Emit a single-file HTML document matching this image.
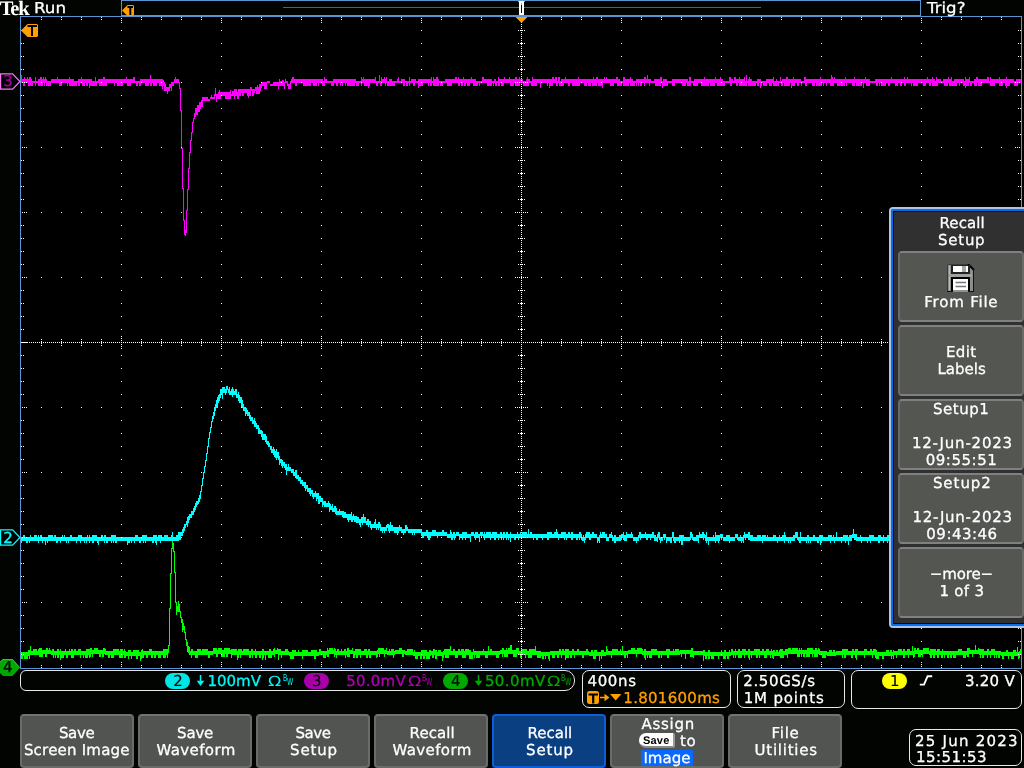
<!DOCTYPE html>
<html><head><meta charset="utf-8"><title>Tek Recall Setup</title>
<style>
html,body{margin:0;padding:0;background:#020402;}
body{width:1024px;height:768px;overflow:hidden;}
#root{width:1024px;height:768px;position:relative;overflow:hidden;will-change:transform;text-rendering:geometricPrecision;-webkit-text-stroke:0.3px;font-family:"DejaVu Sans","Liberation Sans",sans-serif;font-size:15px;color:#fff;line-height:17px;}
.scr{position:absolute;left:0;top:0;}
.t{position:absolute;white-space:nowrap;}
.box{position:absolute;border:1px solid #e8e8e8;border-radius:7px;box-sizing:border-box;}
.btn{position:absolute;top:714px;width:114px;height:54px;box-sizing:border-box;background:#525452;border-radius:4px;border:2px solid #6a6c6a;border-top-color:#727472;}
.btn.sel{background:#0a3f82;border-color:#0c5fd8;}
.pill{position:absolute;width:25px;height:16px;border-radius:8px;box-sizing:border-box;}
.panel{position:absolute;left:889px;top:207px;width:150px;height:421px;box-sizing:border-box;background:#303030;border:2px solid #adc6e0;border-radius:4px;box-shadow:inset 0 0 0 2px #0a6cf0,inset 0 0 0 3px #00004c;}
.pbtn{position:absolute;left:898px;width:126px;height:71px;box-sizing:border-box;background:#545652;border-radius:4px;border:2px solid #6a6a6a;border-top-color:#808080;border-bottom-color:#808080;}
.om{display:inline-block;font-size:14px;transform:scaleX(1.24);transform-origin:0 0;}
.bw{font-size:9.5px;line-height:12px;-webkit-text-stroke:0;transform:scaleX(0.66);transform-origin:0 0;}
.ch{font-size:15px;}
</style></head>
<body><div id="root">
<svg class="scr" width="1024" height="768" viewBox="0 0 1024 768" shape-rendering="crispEdges">
<rect x="21" y="17" width="1000" height="651" fill="#000"/>
<path d="M21.5 652V659M22.5 652V659M23.5 652V656M24.5 652V659M25.5 652V659M26.5 652V659M27.5 652V659M28.5 650V656M29.5 650V659M30.5 646V655M31.5 651V655M32.5 651V655M33.5 649V655M34.5 649V655M35.5 649V655M36.5 649V655M37.5 651V655M38.5 649V655M39.5 648V657M40.5 648V657M41.5 648V657M42.5 650V657M43.5 650V654M44.5 650V654M45.5 650V657M46.5 648V657M47.5 648V654M48.5 650V654M49.5 648V654M50.5 650V654M51.5 651V655M52.5 649V655M53.5 649V658M54.5 651V655M55.5 651V658M56.5 651V655M57.5 649V658M58.5 649V658M59.5 651V655M60.5 649V660M61.5 651V658M62.5 651V658M63.5 651V658M64.5 651V655M65.5 649V655M66.5 651V658M67.5 651V658M68.5 651V655M69.5 649V655M70.5 651V655M71.5 649V658M72.5 649V658M73.5 651V658M74.5 649V655M75.5 649V655M76.5 651V655M77.5 651V655M78.5 649V655M79.5 649V655M80.5 649V658M81.5 651V655M82.5 651V655M83.5 651V658M84.5 651V655M85.5 651V658M86.5 649V658M87.5 649V658M88.5 649V655M89.5 649V658M90.5 648V657M91.5 648V654M92.5 650V657M93.5 650V654M94.5 648V654M95.5 648V654M96.5 648V654M97.5 648V654M98.5 650V654M99.5 650V657M100.5 650V657M101.5 650V654M102.5 650V657M103.5 648V657M104.5 648V654M105.5 649V655M106.5 651V655M107.5 651V655M108.5 651V658M109.5 651V658M110.5 651V655M111.5 651V658M112.5 651V658M113.5 649V658M114.5 649V655M115.5 649V655M116.5 649V655M117.5 649V655M118.5 649V655M119.5 651V658M120.5 649V658M121.5 649V658M122.5 649V658M123.5 651V655M124.5 649V658M125.5 651V658M126.5 652V656M127.5 652V656M128.5 650V659M129.5 650V656M130.5 650V656M131.5 652V659M132.5 652V656M133.5 650V656M134.5 650V656M135.5 650V656M136.5 650V659M137.5 650V659M138.5 650V656M139.5 652V656M140.5 652V661M141.5 650V659M142.5 649V658M143.5 651V658M144.5 651V655M145.5 651V655M146.5 651V658M147.5 651V658M148.5 651V655M149.5 649V655M150.5 649V655M151.5 649V658M152.5 651V658M153.5 651V655M154.5 651V658M155.5 651V658M156.5 651V655M157.5 651V655M158.5 651V658M159.5 651V658M160.5 651V658M161.5 651V655M162.5 651V655M163.5 649V658M164.5 649V658M165.5 649V658M166.5 649V655M167.5 649V658M168.5 645V653M169.5 608V646M170.5 573V609M171.5 548V574M172.5 540V549M173.5 543V552M174.5 551V573M175.5 572V603M176.5 602V615M177.5 606V612M178.5 601V612M179.5 604V612M180.5 611V618M181.5 617V623M182.5 619V632M183.5 623V630M184.5 626V633M185.5 632V640M186.5 639V646M187.5 642V652M188.5 646V653M189.5 647V655M190.5 651V655M191.5 649V658M192.5 649V655M193.5 651V655M194.5 651V655M195.5 651V658M196.5 651V658M197.5 649V658M198.5 649V655M199.5 649V655M200.5 649V655M201.5 651V655M202.5 649V655M203.5 649V655M204.5 649V655M205.5 649V655M206.5 649V655M207.5 649V655M208.5 651V658M209.5 651V658M210.5 651V655M211.5 651V655M212.5 651V655M213.5 648V654M214.5 648V654M215.5 648V654M216.5 648V657M217.5 650V657M218.5 648V654M219.5 648V654M220.5 648V654M221.5 648V657M222.5 650V657M223.5 650V657M224.5 648V657M225.5 648V654M226.5 648V657M227.5 648V657M228.5 648V654M229.5 648V654M230.5 650V654M231.5 649V658M232.5 649V655M233.5 649V655M234.5 649V655M235.5 649V655M236.5 649V655M237.5 651V660M238.5 649V658M239.5 649V655M240.5 649V658M241.5 649V655M242.5 651V655M243.5 649V655M244.5 649V655M245.5 649V655M246.5 649V655M247.5 649V655M248.5 649V655M249.5 651V658M250.5 651V658M251.5 649V655M252.5 649V658M253.5 651V655M254.5 651V655M255.5 649V658M256.5 651V658M257.5 651V655M258.5 651V655M259.5 651V658M260.5 651V658M261.5 651V655M262.5 649V660M263.5 649V658M264.5 651V655M265.5 651V660M266.5 651V655M267.5 651V655M268.5 651V658M269.5 649V658M270.5 649V658M271.5 651V658M272.5 651V655M273.5 649V655M274.5 648V657M275.5 650V654M276.5 650V654M277.5 648V654M278.5 649V660M279.5 649V655M280.5 649V655M281.5 651V658M282.5 651V655M283.5 651V655M284.5 651V655M285.5 649V655M286.5 649V655M287.5 649V655M288.5 651V655M289.5 652V656M290.5 652V659M291.5 652V659M292.5 650V659M293.5 650V659M294.5 650V656M295.5 650V656M296.5 652V656M297.5 652V656M298.5 650V656M299.5 652V656M300.5 652V656M301.5 652V656M302.5 650V659M303.5 650V656M304.5 650V656M305.5 650V656M306.5 650V656M307.5 650V656M308.5 652V656M309.5 652V656M310.5 652V656M311.5 650V656M312.5 650V656M313.5 650V656M314.5 650V659M315.5 650V659M316.5 650V656M317.5 652V656M318.5 652V656M319.5 649V655M320.5 649V655M321.5 651V655M322.5 651V655M323.5 651V658M324.5 651V658M325.5 651V658M326.5 651V655M327.5 648V657M328.5 650V657M329.5 648V654M330.5 648V654M331.5 648V654M332.5 648V654M333.5 650V654M334.5 648V657M335.5 649V655M336.5 651V658M337.5 649V655M338.5 649V655M339.5 651V655M340.5 651V655M341.5 649V655M342.5 651V655M343.5 651V655M344.5 649V655M345.5 649V658M346.5 651V655M347.5 648V657M348.5 648V657M349.5 650V657M350.5 650V654M351.5 650V654M352.5 648V654M353.5 651V658M354.5 651V658M355.5 649V655M356.5 649V658M357.5 649V658M358.5 649V655M359.5 649V655M360.5 649V658M361.5 651V655M362.5 651V655M363.5 651V655M364.5 649V655M365.5 649V655M366.5 649V658M367.5 651V658M368.5 649V655M369.5 649V658M370.5 651V658M371.5 651V655M372.5 651V655M373.5 651V655M374.5 651V655M375.5 651V655M376.5 651V658M377.5 650V657M378.5 648V654M379.5 648V657M380.5 648V654M381.5 648V654M382.5 648V654M383.5 648V654M384.5 650V657M385.5 650V654M386.5 648V654M387.5 651V655M388.5 651V655M389.5 649V655M390.5 651V655M391.5 649V655M392.5 649V655M393.5 649V658M394.5 651V655M395.5 650V654M396.5 650V654M397.5 650V654M398.5 650V654M399.5 648V654M400.5 648V654M401.5 648V654M402.5 650V657M403.5 650V657M404.5 650V654M405.5 651V655M406.5 651V655M407.5 649V655M408.5 649V655M409.5 649V655M410.5 649V655M411.5 649V655M412.5 649V655M413.5 652V656M414.5 650V656M415.5 652V659M416.5 652V659M417.5 652V659M418.5 652V656M419.5 652V656M420.5 652V659M421.5 650V659M422.5 650V656M423.5 650V659M424.5 650V659M425.5 650V656M426.5 650V659M427.5 652V659M428.5 652V659M429.5 650V659M430.5 650V656M431.5 651V655M432.5 651V658M433.5 649V658M434.5 649V655M435.5 650V659M436.5 650V659M437.5 652V656M438.5 650V656M439.5 650V656M440.5 650V656M441.5 652V656M442.5 652V661M443.5 651V658M444.5 649V655M445.5 649V658M446.5 649V658M447.5 649V658M448.5 649V658M449.5 649V655M450.5 646V655M451.5 651V655M452.5 651V655M453.5 649V655M454.5 649V655M455.5 651V658M456.5 651V658M457.5 651V658M458.5 649V655M459.5 649V655M460.5 651V655M461.5 649V655M462.5 649V658M463.5 649V658M464.5 651V658M465.5 649V658M466.5 649V655M467.5 649V655M468.5 649V655M469.5 650V659M470.5 650V659M471.5 652V659M472.5 652V659M473.5 649V655M474.5 651V658M475.5 651V655M476.5 651V658M477.5 651V658M478.5 651V658M479.5 651V658M480.5 651V655M481.5 651V655M482.5 651V655M483.5 649V655M484.5 651V655M485.5 651V658M486.5 651V658M487.5 651V658M488.5 646V655M489.5 651V655M490.5 649V655M491.5 649V655M492.5 651V655M493.5 651V655M494.5 651V655M495.5 651V655M496.5 651V658M497.5 651V658M498.5 651V658M499.5 651V655M500.5 650V654M501.5 650V654M502.5 648V657M503.5 648V654M504.5 650V657M505.5 650V657M506.5 648V657M507.5 650V657M508.5 648V654M509.5 648V654M510.5 645V654M511.5 645V654M512.5 650V654M513.5 650V657M514.5 650V657M515.5 650V657M516.5 648V657M517.5 648V654M518.5 648V654M519.5 651V655M520.5 651V658M521.5 649V658M522.5 649V655M523.5 649V655M524.5 649V655M525.5 649V658M526.5 649V655M527.5 651V655M528.5 651V658M529.5 649V658M530.5 649V658M531.5 649V658M532.5 649V655M533.5 649V655M534.5 649V655M535.5 646V655M536.5 651V655M537.5 651V658M538.5 651V658M539.5 651V658M540.5 651V658M541.5 652V656M542.5 652V659M543.5 652V659M544.5 652V656M545.5 652V659M546.5 652V656M547.5 652V656M548.5 652V659M549.5 652V661M550.5 651V655M551.5 651V655M552.5 651V658M553.5 651V658M554.5 651V658M555.5 651V655M556.5 651V655M557.5 651V658M558.5 651V658M559.5 649V655M560.5 649V655M561.5 651V658M562.5 649V655M563.5 649V655M564.5 651V655M565.5 649V660M566.5 649V658M567.5 649V658M568.5 649V658M569.5 651V655M570.5 651V658M571.5 651V658M572.5 649V655M573.5 649V655M574.5 651V658M575.5 651V655M576.5 651V655M577.5 649V655M578.5 649V655M579.5 651V655M580.5 651V655M581.5 651V655M582.5 651V658M583.5 651V658M584.5 651V655M585.5 651V655M586.5 649V655M587.5 649V655M588.5 651V655M589.5 652V656M590.5 652V656M591.5 650V656M592.5 650V656M593.5 652V659M594.5 650V659M595.5 650V659M596.5 650V656M597.5 652V656M598.5 652V656M599.5 652V661M600.5 652V656M601.5 650V659M602.5 650V656M603.5 650V656M604.5 652V656M605.5 652V656M606.5 646V655M607.5 649V655M608.5 651V655M609.5 651V655M610.5 651V655M611.5 651V658M612.5 649V655M613.5 649V655M614.5 649V655M615.5 649V655M616.5 649V655M617.5 649V655M618.5 651V655M619.5 651V655M620.5 649V655M621.5 651V655M622.5 646V655M623.5 651V655M624.5 651V658M625.5 651V658M626.5 651V655M627.5 651V658M628.5 650V654M629.5 650V654M630.5 650V654M631.5 648V654M632.5 648V654M633.5 648V654M634.5 648V654M635.5 650V654M636.5 650V657M637.5 648V654M638.5 648V654M639.5 648V654M640.5 648V654M641.5 648V654M642.5 649V655M643.5 651V655M644.5 649V658M645.5 649V660M646.5 651V655M647.5 651V658M648.5 651V655M649.5 651V658M650.5 651V658M651.5 649V658M652.5 649V655M653.5 649V655M654.5 649V655M655.5 649V655M656.5 649V655M657.5 651V655M658.5 651V658M659.5 651V658M660.5 651V655M661.5 651V658M662.5 651V655M663.5 651V655M664.5 651V655M665.5 651V655M666.5 649V655M667.5 649V658M668.5 649V658M669.5 649V655M670.5 651V655M671.5 651V655M672.5 651V655M673.5 649V655M674.5 651V655M675.5 649V655M676.5 649V655M677.5 649V655M678.5 649V655M679.5 651V655M680.5 650V654M681.5 650V657M682.5 650V654M683.5 650V654M684.5 650V654M685.5 650V659M686.5 650V654M687.5 650V654M688.5 650V654M689.5 650V654M690.5 650V657M691.5 648V657M692.5 648V657M693.5 651V658M694.5 651V655M695.5 651V655M696.5 651V655M697.5 651V655M698.5 651V655M699.5 651V655M700.5 651V655M701.5 651V655M702.5 651V655M703.5 650V661M704.5 650V656M705.5 652V659M706.5 652V659M707.5 652V656M708.5 650V659M709.5 650V659M710.5 652V656M711.5 652V659M712.5 652V659M713.5 652V659M714.5 652V656M715.5 652V656M716.5 652V656M717.5 652V656M718.5 652V659M719.5 652V656M720.5 652V656M721.5 650V656M722.5 652V656M723.5 652V659M724.5 650V659M725.5 650V659M726.5 652V656M727.5 652V659M728.5 652V659M729.5 650V656M730.5 652V656M731.5 649V655M732.5 649V655M733.5 651V658M734.5 651V655M735.5 649V658M736.5 651V655M737.5 651V655M738.5 649V658M739.5 649V658M740.5 651V658M741.5 651V658M742.5 649V655M743.5 649V655M744.5 649V658M745.5 649V655M746.5 651V655M747.5 651V655M748.5 649V658M749.5 649V660M750.5 651V655M751.5 651V658M752.5 651V655M753.5 651V655M754.5 649V655M755.5 649V655M756.5 649V658M757.5 649V658M758.5 649V655M759.5 649V658M760.5 651V655M761.5 651V655M762.5 649V655M763.5 649V655M764.5 651V658M765.5 651V658M766.5 649V658M767.5 649V655M768.5 649V655M769.5 651V655M770.5 651V658M771.5 649V655M772.5 651V658M773.5 650V659M774.5 650V656M775.5 652V656M776.5 650V656M777.5 650V656M778.5 652V656M779.5 650V656M780.5 649V658M781.5 649V658M782.5 649V658M783.5 651V658M784.5 651V655M785.5 649V655M786.5 649V655M787.5 649V658M788.5 648V654M789.5 648V654M790.5 648V654M791.5 650V654M792.5 648V654M793.5 648V654M794.5 648V654M795.5 648V654M796.5 648V654M797.5 648V657M798.5 650V657M799.5 648V657M800.5 650V654M801.5 648V657M802.5 650V654M803.5 650V657M804.5 650V657M805.5 650V654M806.5 650V657M807.5 648V657M808.5 648V657M809.5 648V657M810.5 648V654M811.5 648V654M812.5 648V657M813.5 650V654M814.5 650V657M815.5 648V657M816.5 648V657M817.5 650V657M818.5 648V654M819.5 649V655M820.5 651V655M821.5 651V655M822.5 651V658M823.5 651V658M824.5 651V658M825.5 651V658M826.5 651V655M827.5 652V656M828.5 652V656M829.5 650V656M830.5 650V656M831.5 650V656M832.5 652V656M833.5 650V656M834.5 650V656M835.5 652V656M836.5 651V655M837.5 651V655M838.5 651V655M839.5 651V655M840.5 651V655M841.5 651V655M842.5 649V658M843.5 649V655M844.5 649V658M845.5 649V658M846.5 649V655M847.5 649V655M848.5 651V655M849.5 651V655M850.5 651V655M851.5 651V658M852.5 649V658M853.5 649V655M854.5 651V655M855.5 649V658M856.5 649V660M857.5 649V655M858.5 651V655M859.5 651V655M860.5 651V655M861.5 651V655M862.5 651V655M863.5 651V655M864.5 649V658M865.5 649V655M866.5 649V655M867.5 651V655M868.5 651V655M869.5 651V655M870.5 649V655M871.5 649V655M872.5 651V658M873.5 649V655M874.5 649V655M875.5 649V658M876.5 650V659M877.5 652V659M878.5 652V659M879.5 652V656M880.5 652V656M881.5 652V656M882.5 652V659M883.5 652V659M884.5 652V656M885.5 652V656M886.5 650V656M887.5 650V656M888.5 650V656M889.5 652V656M890.5 650V656M891.5 650V659M892.5 652V656M893.5 650V659M894.5 651V655M895.5 651V655M896.5 651V658M897.5 651V655M898.5 649V655M899.5 649V655M900.5 649V655M901.5 649V655M902.5 651V655M903.5 649V658M904.5 649V658M905.5 651V655M906.5 651V655M907.5 649V655M908.5 649V658M909.5 649V655M910.5 651V655M911.5 651V655M912.5 646V655M913.5 651V658M914.5 648V657M915.5 648V654M916.5 650V654M917.5 648V654M918.5 648V657M919.5 650V657M920.5 650V657M921.5 650V654M922.5 650V657M923.5 648V654M924.5 648V654M925.5 648V654M926.5 648V654M927.5 648V654M928.5 648V654M929.5 651V655M930.5 649V658M931.5 649V658M932.5 649V655M933.5 649V658M934.5 649V658M935.5 649V655M936.5 651V655M937.5 649V658M938.5 649V658M939.5 649V655M940.5 651V655M941.5 651V658M942.5 649V658M943.5 651V655M944.5 651V658M945.5 651V655M946.5 651V655M947.5 651V658M948.5 651V658M949.5 651V655M950.5 651V658M951.5 651V658M952.5 651V655M953.5 651V658M954.5 651V658M955.5 651V658M956.5 651V655M957.5 651V655M958.5 649V655M959.5 649V655M960.5 649V655M961.5 649V655M962.5 651V655M963.5 651V658M964.5 651V658M965.5 651V658M966.5 651V655M967.5 648V657M968.5 648V657M969.5 648V654M970.5 650V654M971.5 650V654M972.5 650V657M973.5 650V654M974.5 650V654M975.5 645V654M976.5 650V654M977.5 650V654M978.5 648V654M979.5 649V655M980.5 649V658M981.5 649V655M982.5 649V658M983.5 649V658M984.5 651V655M985.5 651V655M986.5 651V655M987.5 649V658M988.5 649V655M989.5 651V655M990.5 651V658M991.5 649V655M992.5 649V655M993.5 649V655M994.5 649V658M995.5 651V655M996.5 651V658M997.5 651V655M998.5 651V658M999.5 651V658M1000.5 651V655M1001.5 652V656M1002.5 652V659M1003.5 652V659M1004.5 652V656M1005.5 652V656M1006.5 650V656M1007.5 650V656M1008.5 652V659M1009.5 652V656M1010.5 652V656M1011.5 652V659M1012.5 652V659M1013.5 650V659M1014.5 650V656M1015.5 650V656M1016.5 652V656M1017.5 647V656M1018.5 652V659M1019.5 651V658M1020.5 649V655" stroke="#00ff00" stroke-width="1" fill="none"/>
<path d="M21.5 75V83M22.5 79V83M23.5 79V86M24.5 77V86M25.5 79V83M26.5 79V83M27.5 77V83M28.5 79V86M29.5 77V86M30.5 77V86M31.5 79V86M32.5 81V86M33.5 81V83M34.5 81V83M35.5 77V86M36.5 81V83M37.5 81V83M38.5 79V86M39.5 79V86M40.5 77V86M41.5 77V86M42.5 79V86M43.5 77V83M44.5 79V86M45.5 77V83M46.5 79V86M47.5 81V86M48.5 81V86M49.5 81V86M50.5 81V86M51.5 79V83M52.5 79V83M53.5 79V83M54.5 79V83M55.5 79V83M56.5 79V83M57.5 77V83M58.5 79V83M59.5 79V86M60.5 79V86M61.5 79V86M62.5 79V83M63.5 79V83M64.5 79V83M65.5 79V83M66.5 79V83M67.5 79V86M68.5 79V83M69.5 77V86M70.5 79V86M71.5 79V86M72.5 79V86M73.5 79V86M74.5 81V86M75.5 81V86M76.5 81V86M77.5 81V83M78.5 79V86M79.5 79V86M80.5 79V83M81.5 77V83M82.5 79V86M83.5 79V86M84.5 79V86M85.5 79V83M86.5 79V86M87.5 79V86M88.5 79V83M89.5 79V88M90.5 79V86M91.5 79V86M92.5 81V86M93.5 81V86M94.5 81V86M95.5 77V86M96.5 81V86M97.5 81V83M98.5 79V83M99.5 79V86M100.5 79V86M101.5 79V86M102.5 79V86M103.5 77V86M104.5 77V86M105.5 79V86M106.5 79V86M107.5 79V83M108.5 79V83M109.5 79V83M110.5 79V83M111.5 79V83M112.5 79V83M113.5 79V83M114.5 79V86M115.5 79V83M116.5 79V83M117.5 79V86M118.5 79V86M119.5 79V86M120.5 79V86M121.5 79V86M122.5 79V86M123.5 79V83M124.5 79V83M125.5 79V83M126.5 77V83M127.5 79V86M128.5 79V86M129.5 79V86M130.5 79V86M131.5 79V83M132.5 79V83M133.5 77V83M134.5 77V83M135.5 81V83M136.5 81V86M137.5 81V86M138.5 81V83M139.5 81V86M140.5 79V86M141.5 79V83M142.5 79V83M143.5 79V83M144.5 79V83M145.5 79V86M146.5 79V86M147.5 79V86M148.5 79V86M149.5 79V83M150.5 75V86M151.5 79V86M152.5 79V83M153.5 79V86M154.5 79V86M155.5 79V86M156.5 79V86M157.5 79V83M158.5 79V83M159.5 79V86M160.5 79V86M161.5 79V86M162.5 79V89M163.5 80V86M164.5 82V91M165.5 84V91M166.5 87V91M167.5 87V94M168.5 87V91M169.5 84V91M170.5 84V88M171.5 82V91M172.5 82V86M173.5 82V86M174.5 79V83M175.5 77V83M176.5 79V83M177.5 79V83M178.5 79V83M179.5 82V89M180.5 88V111M181.5 110V149M182.5 148V189M183.5 188V221M184.5 220V235M185.5 230V236M186.5 210V233M187.5 189V211M188.5 168V190M189.5 152V169M190.5 140V153M191.5 132V141M192.5 122V133M193.5 118V123M194.5 113V119M195.5 108V117M196.5 108V115M197.5 105V115M198.5 105V112M199.5 102V112M200.5 102V109M201.5 100V107M202.5 97V107M203.5 97V101M204.5 97V101M205.5 97V101M206.5 97V101M207.5 97V101M208.5 99V101M209.5 99V101M210.5 97V99M211.5 95V99M212.5 97V99M213.5 97V99M214.5 94V99M215.5 88V96M216.5 94V102M217.5 94V99M218.5 92V99M219.5 90V99M220.5 92V99M221.5 92V96M222.5 92V96M223.5 92V96M224.5 92V96M225.5 92V99M226.5 92V99M227.5 92V99M228.5 92V99M229.5 92V99M230.5 90V99M231.5 94V96M232.5 91V96M233.5 91V96M234.5 89V99M235.5 89V96M236.5 89V96M237.5 92V99M238.5 89V99M239.5 89V96M240.5 89V96M241.5 89V93M242.5 89V96M243.5 89V96M244.5 89V93M245.5 89V93M246.5 89V93M247.5 89V96M248.5 89V98M249.5 89V96M250.5 87V96M251.5 87V91M252.5 89V96M253.5 89V96M254.5 89V93M255.5 87V91M256.5 87V94M257.5 85V94M258.5 87V94M259.5 84V94M260.5 84V91M261.5 82V88M262.5 82V86M263.5 82V86M264.5 82V89M265.5 82V89M266.5 82V89M267.5 81V83M268.5 81V83M269.5 81V83M270.5 84V86M271.5 84V86M272.5 84V86M273.5 82V86M274.5 82V86M275.5 82V86M276.5 82V86M277.5 82V86M278.5 82V89M279.5 79V86M280.5 81V86M281.5 81V86M282.5 80V86M283.5 80V86M284.5 82V89M285.5 79V83M286.5 81V83M287.5 81V86M288.5 84V89M289.5 84V89M290.5 81V89M291.5 79V83M292.5 77V83M293.5 77V83M294.5 79V83M295.5 79V86M296.5 79V86M297.5 79V83M298.5 79V83M299.5 79V83M300.5 79V83M301.5 79V83M302.5 79V83M303.5 79V86M304.5 79V86M305.5 79V86M306.5 79V86M307.5 79V86M308.5 79V86M309.5 79V86M310.5 79V86M311.5 79V83M312.5 79V83M313.5 79V86M314.5 79V86M315.5 79V86M316.5 79V86M317.5 79V83M318.5 79V86M319.5 79V83M320.5 79V83M321.5 79V83M322.5 79V86M323.5 81V86M324.5 77V86M325.5 79V83M326.5 79V83M327.5 81V83M328.5 81V83M329.5 81V83M330.5 81V83M331.5 81V86M332.5 81V86M333.5 79V86M334.5 79V83M335.5 79V83M336.5 79V86M337.5 79V86M338.5 79V83M339.5 79V83M340.5 79V86M341.5 79V83M342.5 79V86M343.5 79V83M344.5 79V83M345.5 79V86M346.5 79V83M347.5 79V86M348.5 79V86M349.5 79V86M350.5 79V86M351.5 79V86M352.5 79V86M353.5 79V86M354.5 79V86M355.5 79V83M356.5 81V86M357.5 81V86M358.5 81V86M359.5 81V83M360.5 81V83M361.5 77V86M362.5 79V83M363.5 77V83M364.5 79V86M365.5 79V86M366.5 79V86M367.5 79V86M368.5 79V88M369.5 79V86M370.5 79V83M371.5 79V83M372.5 79V83M373.5 79V83M374.5 79V83M375.5 77V83M376.5 81V86M377.5 81V86M378.5 81V83M379.5 75V83M380.5 81V86M381.5 77V86M382.5 79V83M383.5 79V83M384.5 77V83M385.5 79V86M386.5 77V83M387.5 81V86M388.5 81V86M389.5 79V86M390.5 79V86M391.5 79V86M392.5 81V86M393.5 81V86M394.5 81V86M395.5 81V83M396.5 81V83M397.5 79V83M398.5 77V83M399.5 81V83M400.5 81V83M401.5 79V83M402.5 79V83M403.5 79V86M404.5 79V86M405.5 81V83M406.5 81V86M407.5 81V86M408.5 81V83M409.5 77V86M410.5 81V83M411.5 79V83M412.5 79V83M413.5 79V86M414.5 79V86M415.5 79V83M416.5 81V83M417.5 81V83M418.5 79V88M419.5 79V86M420.5 79V86M421.5 79V86M422.5 79V86M423.5 79V83M424.5 79V83M425.5 79V83M426.5 79V83M427.5 79V83M428.5 79V86M429.5 79V83M430.5 79V86M431.5 77V86M432.5 81V83M433.5 77V86M434.5 79V86M435.5 79V86M436.5 77V86M437.5 77V86M438.5 79V86M439.5 81V83M440.5 81V86M441.5 81V86M442.5 81V86M443.5 81V83M444.5 81V83M445.5 79V83M446.5 79V83M447.5 79V86M448.5 79V86M449.5 79V86M450.5 79V86M451.5 79V86M452.5 79V83M453.5 79V83M454.5 79V83M455.5 77V83M456.5 77V83M457.5 79V83M458.5 77V86M459.5 79V86M460.5 79V83M461.5 79V86M462.5 79V86M463.5 77V83M464.5 79V86M465.5 79V86M466.5 79V83M467.5 79V86M468.5 79V86M469.5 79V86M470.5 79V83M471.5 77V83M472.5 79V83M473.5 79V86M474.5 79V86M475.5 79V86M476.5 81V86M477.5 81V86M478.5 81V83M479.5 81V86M480.5 81V83M481.5 81V83M482.5 77V83M483.5 77V83M484.5 79V83M485.5 79V83M486.5 79V83M487.5 79V86M488.5 79V86M489.5 79V86M490.5 79V86M491.5 79V86M492.5 81V83M493.5 81V86M494.5 79V83M495.5 79V86M496.5 81V86M497.5 81V83M498.5 77V86M499.5 79V86M500.5 79V83M501.5 79V86M502.5 79V86M503.5 79V86M504.5 77V83M505.5 79V83M506.5 79V83M507.5 79V83M508.5 79V83M509.5 77V83M510.5 79V86M511.5 79V86M512.5 79V86M513.5 79V86M514.5 79V83M515.5 77V86M516.5 77V86M517.5 79V86M518.5 79V86M519.5 77V86M520.5 79V83M521.5 79V83M522.5 79V83M523.5 81V86M524.5 81V86M525.5 81V86M526.5 79V86M527.5 77V86M528.5 79V86M529.5 79V83M530.5 81V83M531.5 81V86M532.5 77V86M533.5 79V86M534.5 79V86M535.5 79V86M536.5 79V86M537.5 79V83M538.5 79V83M539.5 79V83M540.5 79V88M541.5 79V83M542.5 79V83M543.5 79V83M544.5 79V83M545.5 79V83M546.5 79V83M547.5 79V86M548.5 79V83M549.5 79V88M550.5 79V86M551.5 79V86M552.5 77V86M553.5 77V83M554.5 79V83M555.5 77V83M556.5 77V86M557.5 81V86M558.5 77V83M559.5 77V86M560.5 81V86M561.5 79V86M562.5 79V86M563.5 79V86M564.5 79V83M565.5 77V83M566.5 79V83M567.5 79V83M568.5 79V86M569.5 79V86M570.5 79V83M571.5 79V83M572.5 79V86M573.5 79V86M574.5 79V86M575.5 79V86M576.5 79V86M577.5 79V86M578.5 77V86M579.5 79V86M580.5 79V83M581.5 79V83M582.5 79V83M583.5 79V83M584.5 79V86M585.5 79V86M586.5 79V86M587.5 79V83M588.5 79V86M589.5 79V86M590.5 79V86M591.5 79V83M592.5 79V86M593.5 77V86M594.5 79V86M595.5 79V86M596.5 77V86M597.5 77V83M598.5 79V86M599.5 79V86M600.5 79V86M601.5 79V86M602.5 79V88M603.5 79V83M604.5 77V83M605.5 79V83M606.5 77V83M607.5 79V83M608.5 79V83M609.5 79V83M610.5 79V86M611.5 79V86M612.5 79V86M613.5 79V86M614.5 79V83M615.5 79V83M616.5 77V83M617.5 77V86M618.5 79V86M619.5 79V86M620.5 81V86M621.5 81V86M622.5 81V83M623.5 77V86M624.5 77V86M625.5 79V86M626.5 79V86M627.5 79V86M628.5 79V86M629.5 79V83M630.5 77V86M631.5 79V86M632.5 79V86M633.5 81V86M634.5 81V86M635.5 81V83M636.5 79V86M637.5 79V83M638.5 79V86M639.5 79V83M640.5 79V86M641.5 79V86M642.5 79V83M643.5 79V83M644.5 77V86M645.5 77V83M646.5 79V83M647.5 75V83M648.5 79V83M649.5 79V86M650.5 79V83M651.5 81V83M652.5 81V83M653.5 81V83M654.5 79V83M655.5 79V86M656.5 79V86M657.5 79V86M658.5 79V86M659.5 79V86M660.5 77V86M661.5 77V83M662.5 81V88M663.5 79V86M664.5 79V86M665.5 79V86M666.5 79V86M667.5 81V86M668.5 81V83M669.5 81V83M670.5 81V83M671.5 81V83M672.5 79V86M673.5 79V86M674.5 79V86M675.5 79V83M676.5 79V83M677.5 79V83M678.5 79V83M679.5 79V83M680.5 79V83M681.5 79V83M682.5 79V86M683.5 79V86M684.5 79V86M685.5 79V86M686.5 79V83M687.5 79V86M688.5 81V86M689.5 77V86M690.5 77V86M691.5 81V83M692.5 81V83M693.5 81V86M694.5 79V86M695.5 79V86M696.5 79V86M697.5 79V86M698.5 79V83M699.5 79V83M700.5 79V83M701.5 79V86M702.5 79V86M703.5 79V86M704.5 77V86M705.5 79V86M706.5 79V86M707.5 79V86M708.5 79V86M709.5 79V83M710.5 79V86M711.5 79V86M712.5 79V86M713.5 79V86M714.5 79V86M715.5 77V83M716.5 79V83M717.5 79V86M718.5 79V86M719.5 79V86M720.5 77V86M721.5 79V86M722.5 79V86M723.5 81V86M724.5 81V86M725.5 81V83M726.5 81V83M727.5 81V83M728.5 81V83M729.5 77V83M730.5 77V86M731.5 79V86M732.5 79V83M733.5 81V83M734.5 77V83M735.5 77V83M736.5 79V86M737.5 79V86M738.5 79V83M739.5 77V86M740.5 79V86M741.5 79V86M742.5 79V86M743.5 79V86M744.5 77V86M745.5 81V86M746.5 75V86M747.5 81V83M748.5 79V86M749.5 77V86M750.5 79V86M751.5 79V86M752.5 81V86M753.5 81V86M754.5 81V86M755.5 81V86M756.5 81V83M757.5 79V86M758.5 79V86M759.5 79V83M760.5 79V88M761.5 81V86M762.5 81V83M763.5 81V86M764.5 81V86M765.5 81V86M766.5 79V86M767.5 79V83M768.5 79V83M769.5 79V86M770.5 79V86M771.5 79V86M772.5 79V83M773.5 77V86M774.5 81V86M775.5 81V86M776.5 79V86M777.5 81V86M778.5 81V86M779.5 81V83M780.5 77V83M781.5 81V86M782.5 79V86M783.5 79V83M784.5 79V86M785.5 79V86M786.5 77V86M787.5 77V86M788.5 79V86M789.5 79V86M790.5 79V83M791.5 79V88M792.5 79V86M793.5 77V86M794.5 79V86M795.5 79V83M796.5 79V83M797.5 79V86M798.5 79V86M799.5 79V83M800.5 79V83M801.5 81V86M802.5 81V83M803.5 81V83M804.5 77V83M805.5 77V86M806.5 79V86M807.5 79V83M808.5 79V83M809.5 79V83M810.5 79V83M811.5 79V83M812.5 79V86M813.5 79V86M814.5 79V86M815.5 79V83M816.5 79V86M817.5 79V86M818.5 79V86M819.5 79V86M820.5 77V86M821.5 79V86M822.5 79V83M823.5 79V86M824.5 79V83M825.5 79V83M826.5 79V86M827.5 79V83M828.5 79V83M829.5 79V83M830.5 79V86M831.5 75V86M832.5 77V86M833.5 79V86M834.5 77V83M835.5 79V83M836.5 79V83M837.5 79V86M838.5 79V86M839.5 79V86M840.5 79V86M841.5 79V86M842.5 79V86M843.5 79V86M844.5 79V86M845.5 77V83M846.5 79V86M847.5 79V83M848.5 79V83M849.5 79V83M850.5 79V83M851.5 79V83M852.5 79V86M853.5 79V86M854.5 77V86M855.5 79V83M856.5 79V86M857.5 79V86M858.5 79V86M859.5 79V86M860.5 79V86M861.5 79V86M862.5 79V83M863.5 79V88M864.5 79V83M865.5 77V83M866.5 79V86M867.5 79V86M868.5 79V86M869.5 79V86M870.5 81V83M871.5 81V83M872.5 81V83M873.5 81V83M874.5 81V83M875.5 79V83M876.5 79V86M877.5 79V86M878.5 79V83M879.5 79V86M880.5 79V83M881.5 79V86M882.5 79V86M883.5 79V86M884.5 79V86M885.5 79V86M886.5 79V83M887.5 79V83M888.5 79V86M889.5 79V86M890.5 79V83M891.5 77V83M892.5 79V83M893.5 79V83M894.5 79V83M895.5 79V86M896.5 79V86M897.5 79V86M898.5 79V83M899.5 79V83M900.5 79V86M901.5 79V86M902.5 79V83M903.5 79V83M904.5 77V86M905.5 79V86M906.5 79V83M907.5 77V83M908.5 79V83M909.5 79V83M910.5 79V83M911.5 79V86M912.5 79V83M913.5 79V86M914.5 79V86M915.5 79V86M916.5 79V86M917.5 79V86M918.5 79V83M919.5 79V83M920.5 79V83M921.5 79V83M922.5 79V83M923.5 79V86M924.5 79V86M925.5 79V86M926.5 79V83M927.5 77V83M928.5 79V83M929.5 79V86M930.5 79V86M931.5 79V83M932.5 77V86M933.5 79V86M934.5 79V86M935.5 81V86M936.5 77V86M937.5 79V86M938.5 79V83M939.5 79V83M940.5 79V83M941.5 81V83M942.5 81V83M943.5 79V83M944.5 79V86M945.5 79V86M946.5 79V86M947.5 79V86M948.5 77V83M949.5 79V86M950.5 79V86M951.5 77V86M952.5 81V86M953.5 81V86M954.5 79V86M955.5 79V86M956.5 79V86M957.5 79V83M958.5 79V83M959.5 79V86M960.5 79V83M961.5 79V83M962.5 79V83M963.5 79V86M964.5 81V86M965.5 77V88M966.5 79V86M967.5 79V86M968.5 79V86M969.5 77V83M970.5 81V86M971.5 81V86M972.5 81V83M973.5 81V83M974.5 79V86M975.5 79V86M976.5 77V86M977.5 77V83M978.5 79V86M979.5 79V86M980.5 79V86M981.5 79V86M982.5 79V83M983.5 79V83M984.5 79V83M985.5 79V83M986.5 79V83M987.5 77V83M988.5 77V83M989.5 81V83M990.5 77V86M991.5 79V86M992.5 79V86M993.5 79V86M994.5 79V86M995.5 79V83M996.5 79V83M997.5 79V83M998.5 79V83M999.5 77V86M1000.5 79V86M1001.5 79V86M1002.5 79V86M1003.5 79V83M1004.5 79V83M1005.5 79V86M1006.5 77V88M1007.5 79V86M1008.5 79V86M1009.5 79V86M1010.5 79V83M1011.5 79V83M1012.5 79V83M1013.5 79V83M1014.5 81V86M1015.5 81V86M1016.5 79V86M1017.5 79V86M1018.5 79V83M1019.5 79V83M1020.5 79V83" stroke="#ff00ff" stroke-width="1" fill="none"/>
<path d="M21.5 537V543M22.5 537V541M23.5 535V541M24.5 535V541M25.5 537V541M26.5 537V543M27.5 537V543M28.5 537V541M29.5 537V543M30.5 535V541M31.5 537V541M32.5 537V541M33.5 537V541M34.5 535V541M35.5 535V541M36.5 535V541M37.5 537V541M38.5 535V543M39.5 537V541M40.5 535V541M41.5 535V541M42.5 537V543M43.5 537V541M44.5 537V541M45.5 537V545M46.5 537V541M47.5 537V543M48.5 535V541M49.5 535V541M50.5 535V541M51.5 535V541M52.5 535V541M53.5 537V541M54.5 535V541M55.5 535V541M56.5 537V543M57.5 537V543M58.5 537V541M59.5 537V541M60.5 537V543M61.5 537V541M62.5 535V541M63.5 537V541M64.5 535V541M65.5 537V541M66.5 537V543M67.5 537V541M68.5 537V543M69.5 537V541M70.5 535V541M71.5 535V541M72.5 537V541M73.5 537V541M74.5 537V541M75.5 537V541M76.5 537V543M77.5 537V541M78.5 535V541M79.5 535V541M80.5 535V543M81.5 535V541M82.5 537V541M83.5 537V541M84.5 537V543M85.5 537V541M86.5 537V543M87.5 535V541M88.5 537V541M89.5 535V543M90.5 537V541M91.5 537V541M92.5 535V543M93.5 535V543M94.5 535V541M95.5 535V541M96.5 535V541M97.5 537V543M98.5 537V545M99.5 537V541M100.5 537V541M101.5 535V541M102.5 535V541M103.5 537V541M104.5 535V543M105.5 535V541M106.5 537V543M107.5 537V543M108.5 537V541M109.5 537V541M110.5 537V541M111.5 535V543M112.5 535V541M113.5 535V543M114.5 535V541M115.5 535V543M116.5 537V543M117.5 537V541M118.5 537V541M119.5 537V541M120.5 537V541M121.5 537V541M122.5 537V541M123.5 537V541M124.5 537V541M125.5 537V541M126.5 537V541M127.5 537V545M128.5 537V543M129.5 537V543M130.5 537V541M131.5 537V543M132.5 537V541M133.5 537V541M134.5 537V543M135.5 535V541M136.5 535V541M137.5 535V541M138.5 537V541M139.5 537V543M140.5 537V543M141.5 537V541M142.5 535V541M143.5 535V543M144.5 535V541M145.5 535V543M146.5 535V541M147.5 537V541M148.5 537V541M149.5 537V541M150.5 537V541M151.5 537V541M152.5 537V543M153.5 535V543M154.5 535V541M155.5 535V543M156.5 535V545M157.5 537V541M158.5 535V541M159.5 535V541M160.5 535V543M161.5 535V541M162.5 537V541M163.5 537V541M164.5 535V541M165.5 535V541M166.5 535V541M167.5 535V541M168.5 537V541M169.5 537V541M170.5 537V541M171.5 535V541M172.5 532V541M173.5 537V541M174.5 537V541M175.5 537V541M176.5 535V541M177.5 535V541M178.5 532V541M179.5 532V540M180.5 532V540M181.5 532V536M182.5 529V536M183.5 527V533M184.5 524V531M185.5 524V528M186.5 521V525M187.5 517V527M188.5 516V523M189.5 514V520M190.5 514V518M191.5 511V518M192.5 511V515M193.5 508V515M194.5 506V512M195.5 503V510M196.5 501V507M197.5 501V505M198.5 498V504M199.5 495V502M200.5 491V499M201.5 485V492M202.5 478V486M203.5 472V479M204.5 466V473M205.5 460V467M206.5 453V461M207.5 446V454M208.5 438V447M209.5 432V439M210.5 427V433M211.5 421V428M212.5 416V422M213.5 412V419M214.5 407V416M215.5 404V411M216.5 400V408M217.5 397V408M218.5 395V403M219.5 394V401M220.5 389V398M221.5 389V395M222.5 387V399M223.5 387V393M224.5 387V393M225.5 389V395M226.5 386V393M227.5 386V390M228.5 389V393M229.5 387V395M230.5 391V395M231.5 389V395M232.5 387V397M233.5 389V395M234.5 391V395M235.5 389V395M236.5 389V398M237.5 394V398M238.5 392V401M239.5 395V403M240.5 397V403M241.5 397V408M242.5 400V408M243.5 404V411M244.5 407V411M245.5 407V416M246.5 408V414M247.5 410V416M248.5 412V416M249.5 412V419M250.5 415V421M251.5 417V421M252.5 417V424M253.5 420V424M254.5 418V427M255.5 421V427M256.5 423V429M257.5 425V429M258.5 425V434M259.5 428V434M260.5 430V434M261.5 430V437M262.5 431V440M263.5 434V440M264.5 434V440M265.5 434V442M266.5 436V444M267.5 441V445M268.5 441V447M269.5 443V447M270.5 446V450M271.5 446V453M272.5 449V453M273.5 447V455M274.5 449V457M275.5 451V458M276.5 449V460M277.5 452V458M278.5 452V460M279.5 456V465M280.5 459V463M281.5 459V466M282.5 460V468M283.5 462V466M284.5 462V468M285.5 464V470M286.5 464V475M287.5 467V471M288.5 464V471M289.5 467V471M290.5 467V471M291.5 469V473M292.5 469V473M293.5 469V476M294.5 472V476M295.5 470V478M296.5 470V479M297.5 475V479M298.5 475V481M299.5 477V481M300.5 477V484M301.5 480V484M302.5 480V486M303.5 482V486M304.5 482V488M305.5 482V491M306.5 485V489M307.5 485V492M308.5 488V492M309.5 488V494M310.5 488V496M311.5 490V494M312.5 490V497M313.5 493V499M314.5 493V497M315.5 491V497M316.5 493V501M317.5 493V499M318.5 493V504M319.5 496V504M320.5 496V502M321.5 498V502M322.5 498V507M323.5 501V505M324.5 501V507M325.5 501V507M326.5 503V507M327.5 503V507M328.5 501V507M329.5 503V512M330.5 504V510M331.5 506V510M332.5 504V512M333.5 508V512M334.5 506V512M335.5 506V514M336.5 508V515M337.5 511V515M338.5 511V515M339.5 509V515M340.5 511V515M341.5 511V515M342.5 511V517M343.5 511V518M344.5 512V518M345.5 512V518M346.5 514V518M347.5 514V520M348.5 514V522M349.5 514V520M350.5 514V520M351.5 512V522M352.5 516V522M353.5 514V520M354.5 516V522M355.5 516V522M356.5 516V523M357.5 517V523M358.5 517V523M359.5 519V525M360.5 519V527M361.5 517V523M362.5 517V525M363.5 514V523M364.5 517V523M365.5 517V523M366.5 521V525M367.5 519V525M368.5 519V527M369.5 521V525M370.5 521V528M371.5 524V530M372.5 524V528M373.5 524V528M374.5 522V528M375.5 519V528M376.5 524V530M377.5 524V528M378.5 522V530M379.5 522V528M380.5 524V531M381.5 527V531M382.5 527V533M383.5 527V531M384.5 527V533M385.5 527V531M386.5 525V531M387.5 524V528M388.5 524V531M389.5 525V533M390.5 522V531M391.5 525V531M392.5 525V531M393.5 527V531M394.5 527V533M395.5 527V533M396.5 527V533M397.5 527V535M398.5 527V533M399.5 525V531M400.5 527V531M401.5 527V533M402.5 529V533M403.5 529V535M404.5 529V533M405.5 525V533M406.5 525V531M407.5 527V531M408.5 529V533M409.5 529V533M410.5 529V533M411.5 529V533M412.5 529V535M413.5 529V533M414.5 529V535M415.5 529V533M416.5 529V533M417.5 529V533M418.5 529V533M419.5 529V533M420.5 529V533M421.5 529V536M422.5 532V538M423.5 532V538M424.5 532V536M425.5 532V536M426.5 530V536M427.5 530V538M428.5 532V540M429.5 532V540M430.5 532V538M431.5 532V536M432.5 530V536M433.5 530V536M434.5 530V536M435.5 530V536M436.5 532V536M437.5 532V538M438.5 532V536M439.5 532V536M440.5 532V536M441.5 532V536M442.5 530V536M443.5 530V536M444.5 532V536M445.5 532V536M446.5 532V536M447.5 534V538M448.5 534V538M449.5 534V538M450.5 530V538M451.5 532V540M452.5 534V540M453.5 532V538M454.5 532V540M455.5 534V538M456.5 532V536M457.5 532V536M458.5 532V536M459.5 534V540M460.5 534V538M461.5 534V538M462.5 532V540M463.5 532V538M464.5 532V538M465.5 532V540M466.5 532V538M467.5 534V538M468.5 534V538M469.5 534V538M470.5 534V542M471.5 532V536M472.5 532V536M473.5 532V536M474.5 534V538M475.5 532V540M476.5 532V538M477.5 532V538M478.5 534V538M479.5 534V542M480.5 532V536M481.5 532V538M482.5 532V536M483.5 534V538M484.5 532V540M485.5 534V538M486.5 532V538M487.5 532V538M488.5 532V538M489.5 532V538M490.5 532V540M491.5 534V538M492.5 532V538M493.5 532V538M494.5 532V540M495.5 532V540M496.5 532V538M497.5 534V538M498.5 534V540M499.5 534V538M500.5 532V538M501.5 532V540M502.5 534V538M503.5 532V540M504.5 532V538M505.5 534V538M506.5 532V540M507.5 532V538M508.5 534V540M509.5 534V538M510.5 532V542M511.5 534V538M512.5 534V538M513.5 534V538M514.5 534V540M515.5 534V540M516.5 534V538M517.5 532V538M518.5 534V540M519.5 534V538M520.5 532V538M521.5 534V538M522.5 532V538M523.5 532V538M524.5 532V538M525.5 532V538M526.5 532V538M527.5 534V538M528.5 529V538M529.5 534V538M530.5 532V538M531.5 532V538M532.5 534V538M533.5 534V540M534.5 534V538M535.5 534V538M536.5 534V540M537.5 534V540M538.5 534V538M539.5 534V538M540.5 534V538M541.5 534V538M542.5 534V540M543.5 534V538M544.5 534V538M545.5 534V538M546.5 534V538M547.5 532V540M548.5 532V540M549.5 532V538M550.5 532V538M551.5 532V538M552.5 534V538M553.5 534V538M554.5 532V538M555.5 532V538M556.5 529V538M557.5 532V538M558.5 534V540M559.5 534V538M560.5 534V538M561.5 532V538M562.5 532V538M563.5 532V538M564.5 532V540M565.5 532V538M566.5 534V540M567.5 534V538M568.5 532V538M569.5 532V538M570.5 534V538M571.5 532V540M572.5 532V540M573.5 534V538M574.5 534V538M575.5 534V538M576.5 534V540M577.5 534V540M578.5 534V538M579.5 532V540M580.5 532V538M581.5 534V540M582.5 537V541M583.5 535V541M584.5 537V543M585.5 534V540M586.5 532V538M587.5 532V538M588.5 532V538M589.5 532V540M590.5 534V540M591.5 534V538M592.5 532V538M593.5 532V538M594.5 534V538M595.5 534V538M596.5 534V538M597.5 537V543M598.5 537V541M599.5 535V543M600.5 532V538M601.5 534V538M602.5 532V538M603.5 532V538M604.5 532V538M605.5 534V538M606.5 534V541M607.5 537V541M608.5 537V541M609.5 534V538M610.5 534V538M611.5 532V538M612.5 535V541M613.5 537V541M614.5 535V543M615.5 535V543M616.5 537V541M617.5 537V541M618.5 537V541M619.5 535V541M620.5 535V541M621.5 534V540M622.5 534V538M623.5 532V540M624.5 535V541M625.5 535V541M626.5 532V541M627.5 534V538M628.5 534V538M629.5 534V538M630.5 534V538M631.5 532V538M632.5 534V538M633.5 537V541M634.5 537V541M635.5 537V541M636.5 537V543M637.5 537V541M638.5 535V541M639.5 532V538M640.5 532V540M641.5 534V538M642.5 534V538M643.5 534V538M644.5 534V538M645.5 532V538M646.5 534V540M647.5 534V540M648.5 534V538M649.5 534V538M650.5 534V540M651.5 534V538M652.5 532V538M653.5 532V538M654.5 535V541M655.5 535V541M656.5 537V541M657.5 534V542M658.5 532V538M659.5 532V540M660.5 537V543M661.5 537V541M662.5 537V541M663.5 534V538M664.5 534V540M665.5 534V538M666.5 537V543M667.5 537V541M668.5 537V541M669.5 537V541M670.5 537V543M671.5 537V543M672.5 532V538M673.5 532V541M674.5 537V543M675.5 537V543M676.5 537V541M677.5 537V541M678.5 537V541M679.5 535V543M680.5 535V541M681.5 535V545M682.5 535V545M683.5 535V541M684.5 537V541M685.5 537V541M686.5 537V541M687.5 537V541M688.5 537V541M689.5 537V541M690.5 532V540M691.5 532V538M692.5 534V540M693.5 537V541M694.5 537V541M695.5 537V541M696.5 535V541M697.5 535V541M698.5 535V543M699.5 532V538M700.5 534V538M701.5 534V538M702.5 532V538M703.5 532V540M704.5 534V538M705.5 535V541M706.5 532V543M707.5 537V541M708.5 537V545M709.5 537V541M710.5 537V541M711.5 537V541M712.5 537V541M713.5 535V541M714.5 537V541M715.5 532V543M716.5 535V541M717.5 535V541M718.5 535V543M719.5 535V541M720.5 534V538M721.5 534V540M722.5 534V538M723.5 537V541M724.5 537V541M725.5 537V541M726.5 535V541M727.5 535V541M728.5 535V541M729.5 535V543M730.5 537V541M731.5 537V541M732.5 537V541M733.5 537V541M734.5 537V541M735.5 534V538M736.5 534V538M737.5 534V540M738.5 537V541M739.5 537V541M740.5 535V541M741.5 537V543M742.5 537V541M743.5 535V543M744.5 532V538M745.5 534V540M746.5 534V538M747.5 534V538M748.5 532V540M749.5 532V540M750.5 535V541M751.5 535V541M752.5 535V541M753.5 537V541M754.5 537V541M755.5 537V541M756.5 537V541M757.5 535V541M758.5 535V541M759.5 535V541M760.5 535V541M761.5 537V541M762.5 535V543M763.5 535V541M764.5 535V541M765.5 535V541M766.5 537V541M767.5 535V541M768.5 537V541M769.5 537V541M770.5 537V541M771.5 537V541M772.5 537V541M773.5 535V541M774.5 535V541M775.5 535V541M776.5 537V541M777.5 537V543M778.5 537V541M779.5 535V541M780.5 537V541M781.5 537V541M782.5 535V541M783.5 535V541M784.5 532V543M785.5 535V541M786.5 537V541M787.5 537V541M788.5 537V543M789.5 537V541M790.5 537V543M791.5 537V541M792.5 537V541M793.5 535V541M794.5 535V541M795.5 532V538M796.5 532V538M797.5 532V540M798.5 537V541M799.5 537V543M800.5 532V543M801.5 537V541M802.5 537V541M803.5 537V541M804.5 537V541M805.5 537V541M806.5 537V543M807.5 535V541M808.5 535V543M809.5 537V541M810.5 537V543M811.5 537V541M812.5 537V541M813.5 535V541M814.5 535V541M815.5 537V541M816.5 537V541M817.5 537V543M818.5 537V543M819.5 535V541M820.5 535V545M821.5 535V543M822.5 535V541M823.5 537V541M824.5 537V541M825.5 537V541M826.5 537V541M827.5 537V541M828.5 535V541M829.5 535V541M830.5 535V543M831.5 535V541M832.5 537V541M833.5 535V541M834.5 537V543M835.5 537V541M836.5 532V541M837.5 537V541M838.5 537V541M839.5 537V541M840.5 537V541M841.5 537V543M842.5 537V541M843.5 535V541M844.5 535V541M845.5 535V543M846.5 535V541M847.5 535V541M848.5 537V545M849.5 535V541M850.5 535V541M851.5 535V541M852.5 534V538M853.5 529V538M854.5 534V540M855.5 534V540M856.5 534V541M857.5 537V541M858.5 537V541M859.5 537V541M860.5 535V541M861.5 537V543M862.5 537V541M863.5 537V541M864.5 537V541M865.5 537V541M866.5 537V541M867.5 537V543M868.5 537V541M869.5 535V541M870.5 535V543M871.5 535V541M872.5 535V541M873.5 535V541M874.5 537V541M875.5 537V541M876.5 537V541M877.5 537V541M878.5 535V543M879.5 535V543M880.5 535V541M881.5 537V541M882.5 537V541M883.5 535V543M884.5 537V541M885.5 537V541M886.5 537V541M887.5 535V543M888.5 535V541" stroke="#00ffff" stroke-width="1" fill="none"/>
<path d="M41 82.5H1002" stroke="#fff" stroke-width="1" stroke-dasharray="1 19"/>
<path d="M41 147.5H1002" stroke="#fff" stroke-width="1" stroke-dasharray="1 19"/>
<path d="M41 212.5H1002" stroke="#fff" stroke-width="1" stroke-dasharray="1 19"/>
<path d="M41 277.5H1002" stroke="#fff" stroke-width="1" stroke-dasharray="1 19"/>
<path d="M41 407.5H1002" stroke="#fff" stroke-width="1" stroke-dasharray="1 19"/>
<path d="M41 472.5H1002" stroke="#fff" stroke-width="1" stroke-dasharray="1 19"/>
<path d="M41 537.5H1002" stroke="#fff" stroke-width="1" stroke-dasharray="1 19"/>
<path d="M41 602.5H1002" stroke="#fff" stroke-width="1" stroke-dasharray="1 19"/>
<path d="M121.5 30V656" stroke="#fff" stroke-width="1" stroke-dasharray="1 12"/>
<path d="M221.5 30V656" stroke="#fff" stroke-width="1" stroke-dasharray="1 12"/>
<path d="M321.5 30V656" stroke="#fff" stroke-width="1" stroke-dasharray="1 12"/>
<path d="M421.5 30V656" stroke="#fff" stroke-width="1" stroke-dasharray="1 12"/>
<path d="M621.5 30V656" stroke="#fff" stroke-width="1" stroke-dasharray="1 12"/>
<path d="M721.5 30V656" stroke="#fff" stroke-width="1" stroke-dasharray="1 12"/>
<path d="M821.5 30V656" stroke="#fff" stroke-width="1" stroke-dasharray="1 12"/>
<path d="M921.5 30V656" stroke="#fff" stroke-width="1" stroke-dasharray="1 12"/>
<path d="M21 342.5H1021" stroke="#fff" stroke-width="1" stroke-dasharray="1 1"/>
<path d="M41.5 339v1m0 1v3m0 1v1M61.5 339v1m0 1v3m0 1v1M81.5 339v1m0 1v3m0 1v1M101.5 339v1m0 1v3m0 1v1M121.5 336v1m0 1v1m0 1v1m0 1v1m0 1v1m0 1v1m0 1v1M141.5 339v1m0 1v3m0 1v1M161.5 339v1m0 1v3m0 1v1M181.5 339v1m0 1v3m0 1v1M201.5 339v1m0 1v3m0 1v1M221.5 336v1m0 1v1m0 1v1m0 1v1m0 1v1m0 1v1m0 1v1M241.5 339v1m0 1v3m0 1v1M261.5 339v1m0 1v3m0 1v1M281.5 339v1m0 1v3m0 1v1M301.5 339v1m0 1v3m0 1v1M321.5 336v1m0 1v1m0 1v1m0 1v1m0 1v1m0 1v1m0 1v1M341.5 339v1m0 1v3m0 1v1M361.5 339v1m0 1v3m0 1v1M381.5 339v1m0 1v3m0 1v1M401.5 339v1m0 1v3m0 1v1M421.5 336v1m0 1v1m0 1v1m0 1v1m0 1v1m0 1v1m0 1v1M441.5 339v1m0 1v3m0 1v1M461.5 339v1m0 1v3m0 1v1M481.5 339v1m0 1v3m0 1v1M501.5 339v1m0 1v3m0 1v1M541.5 339v1m0 1v3m0 1v1M561.5 339v1m0 1v3m0 1v1M581.5 339v1m0 1v3m0 1v1M601.5 339v1m0 1v3m0 1v1M621.5 336v1m0 1v1m0 1v1m0 1v1m0 1v1m0 1v1m0 1v1M641.5 339v1m0 1v3m0 1v1M661.5 339v1m0 1v3m0 1v1M681.5 339v1m0 1v3m0 1v1M701.5 339v1m0 1v3m0 1v1M721.5 336v1m0 1v1m0 1v1m0 1v1m0 1v1m0 1v1m0 1v1M741.5 339v1m0 1v3m0 1v1M761.5 339v1m0 1v3m0 1v1M781.5 339v1m0 1v3m0 1v1M801.5 339v1m0 1v3m0 1v1M821.5 336v1m0 1v1m0 1v1m0 1v1m0 1v1m0 1v1m0 1v1M841.5 339v1m0 1v3m0 1v1M861.5 339v1m0 1v3m0 1v1M881.5 339v1m0 1v3m0 1v1M901.5 339v1m0 1v3m0 1v1M921.5 336v1m0 1v1m0 1v1m0 1v1m0 1v1m0 1v1m0 1v1M941.5 339v1m0 1v3m0 1v1M961.5 339v1m0 1v3m0 1v1M981.5 339v1m0 1v3m0 1v1M1001.5 339v1m0 1v3m0 1v1" stroke="#fff" stroke-width="1"/>
<path d="M521.5 18V668" stroke="#fff" stroke-width="1" stroke-dasharray="1 1"/>
<path d="M518 30.5h1m1 0h3m1 0h1M518 43.5h1m1 0h3m1 0h1M518 56.5h1m1 0h3m1 0h1M518 69.5h1m1 0h3m1 0h1M515 82.5h1m1 0h1m1 0h1m1 0h1m1 0h1m1 0h1m1 0h1M518 95.5h1m1 0h3m1 0h1M518 108.5h1m1 0h3m1 0h1M518 121.5h1m1 0h3m1 0h1M518 134.5h1m1 0h3m1 0h1M515 147.5h1m1 0h1m1 0h1m1 0h1m1 0h1m1 0h1m1 0h1M518 160.5h1m1 0h3m1 0h1M518 173.5h1m1 0h3m1 0h1M518 186.5h1m1 0h3m1 0h1M518 199.5h1m1 0h3m1 0h1M515 212.5h1m1 0h1m1 0h1m1 0h1m1 0h1m1 0h1m1 0h1M518 225.5h1m1 0h3m1 0h1M518 238.5h1m1 0h3m1 0h1M518 251.5h1m1 0h3m1 0h1M518 264.5h1m1 0h3m1 0h1M515 277.5h1m1 0h1m1 0h1m1 0h1m1 0h1m1 0h1m1 0h1M518 290.5h1m1 0h3m1 0h1M518 303.5h1m1 0h3m1 0h1M518 316.5h1m1 0h3m1 0h1M518 329.5h1m1 0h3m1 0h1M518 355.5h1m1 0h3m1 0h1M518 368.5h1m1 0h3m1 0h1M518 381.5h1m1 0h3m1 0h1M518 394.5h1m1 0h3m1 0h1M515 407.5h1m1 0h1m1 0h1m1 0h1m1 0h1m1 0h1m1 0h1M518 420.5h1m1 0h3m1 0h1M518 433.5h1m1 0h3m1 0h1M518 446.5h1m1 0h3m1 0h1M518 459.5h1m1 0h3m1 0h1M515 472.5h1m1 0h1m1 0h1m1 0h1m1 0h1m1 0h1m1 0h1M518 485.5h1m1 0h3m1 0h1M518 498.5h1m1 0h3m1 0h1M518 511.5h1m1 0h3m1 0h1M518 524.5h1m1 0h3m1 0h1M515 537.5h1m1 0h1m1 0h1m1 0h1m1 0h1m1 0h1m1 0h1M518 550.5h1m1 0h3m1 0h1M518 563.5h1m1 0h3m1 0h1M518 576.5h1m1 0h3m1 0h1M518 589.5h1m1 0h3m1 0h1M515 602.5h1m1 0h1m1 0h1m1 0h1m1 0h1m1 0h1m1 0h1M518 615.5h1m1 0h3m1 0h1M518 628.5h1m1 0h3m1 0h1M518 641.5h1m1 0h3m1 0h1M518 654.5h1m1 0h3m1 0h1" stroke="#fff" stroke-width="1"/>
<path d="M41.5 17v1m0 1v1M41.5 665v1m0 1v1M61.5 17v1m0 1v1M61.5 665v1m0 1v1M81.5 17v1m0 1v1M81.5 665v1m0 1v1M101.5 17v1m0 1v1M101.5 665v1m0 1v1M121.5 18v1m0 1v1m0 1v1M121.5 662v1m0 1v1m0 1v1M141.5 17v1m0 1v1M141.5 665v1m0 1v1M161.5 17v1m0 1v1M161.5 665v1m0 1v1M181.5 17v1m0 1v1M181.5 665v1m0 1v1M201.5 17v1m0 1v1M201.5 665v1m0 1v1M221.5 18v1m0 1v1m0 1v1M221.5 662v1m0 1v1m0 1v1M241.5 17v1m0 1v1M241.5 665v1m0 1v1M261.5 17v1m0 1v1M261.5 665v1m0 1v1M281.5 17v1m0 1v1M281.5 665v1m0 1v1M301.5 17v1m0 1v1M301.5 665v1m0 1v1M321.5 18v1m0 1v1m0 1v1M321.5 662v1m0 1v1m0 1v1M341.5 17v1m0 1v1M341.5 665v1m0 1v1M361.5 17v1m0 1v1M361.5 665v1m0 1v1M381.5 17v1m0 1v1M381.5 665v1m0 1v1M401.5 17v1m0 1v1M401.5 665v1m0 1v1M421.5 18v1m0 1v1m0 1v1M421.5 662v1m0 1v1m0 1v1M441.5 17v1m0 1v1M441.5 665v1m0 1v1M461.5 17v1m0 1v1M461.5 665v1m0 1v1M481.5 17v1m0 1v1M481.5 665v1m0 1v1M501.5 17v1m0 1v1M501.5 665v1m0 1v1M521.5 18v1m0 1v1m0 1v1M521.5 662v1m0 1v1m0 1v1M541.5 17v1m0 1v1M541.5 665v1m0 1v1M561.5 17v1m0 1v1M561.5 665v1m0 1v1M581.5 17v1m0 1v1M581.5 665v1m0 1v1M601.5 17v1m0 1v1M601.5 665v1m0 1v1M621.5 18v1m0 1v1m0 1v1M621.5 662v1m0 1v1m0 1v1M641.5 17v1m0 1v1M641.5 665v1m0 1v1M661.5 17v1m0 1v1M661.5 665v1m0 1v1M681.5 17v1m0 1v1M681.5 665v1m0 1v1M701.5 17v1m0 1v1M701.5 665v1m0 1v1M721.5 18v1m0 1v1m0 1v1M721.5 662v1m0 1v1m0 1v1M741.5 17v1m0 1v1M741.5 665v1m0 1v1M761.5 17v1m0 1v1M761.5 665v1m0 1v1M781.5 17v1m0 1v1M781.5 665v1m0 1v1M801.5 17v1m0 1v1M801.5 665v1m0 1v1M821.5 18v1m0 1v1m0 1v1M821.5 662v1m0 1v1m0 1v1M841.5 17v1m0 1v1M841.5 665v1m0 1v1M861.5 17v1m0 1v1M861.5 665v1m0 1v1M881.5 17v1m0 1v1M881.5 665v1m0 1v1M901.5 17v1m0 1v1M901.5 665v1m0 1v1M921.5 18v1m0 1v1m0 1v1M921.5 662v1m0 1v1m0 1v1M941.5 17v1m0 1v1M941.5 665v1m0 1v1M961.5 17v1m0 1v1M961.5 665v1m0 1v1M981.5 17v1m0 1v1M981.5 665v1m0 1v1M1001.5 17v1m0 1v1M1001.5 665v1m0 1v1" stroke="#fff" stroke-width="1"/>
<path d="M21 30.5h1m1 0h1M1018 30.5h1m1 0h1M21 43.5h1m1 0h1M1018 43.5h1m1 0h1M21 56.5h1m1 0h1M1018 56.5h1m1 0h1M21 69.5h1m1 0h1M1018 69.5h1m1 0h1M22 82.5h1m1 0h1m1 0h1M1015 82.5h1m1 0h1m1 0h1M21 95.5h1m1 0h1M1018 95.5h1m1 0h1M21 108.5h1m1 0h1M1018 108.5h1m1 0h1M21 121.5h1m1 0h1M1018 121.5h1m1 0h1M21 134.5h1m1 0h1M1018 134.5h1m1 0h1M22 147.5h1m1 0h1m1 0h1M1015 147.5h1m1 0h1m1 0h1M21 160.5h1m1 0h1M1018 160.5h1m1 0h1M21 173.5h1m1 0h1M1018 173.5h1m1 0h1M21 186.5h1m1 0h1M1018 186.5h1m1 0h1M21 199.5h1m1 0h1M1018 199.5h1m1 0h1M22 212.5h1m1 0h1m1 0h1M1015 212.5h1m1 0h1m1 0h1M21 225.5h1m1 0h1M1018 225.5h1m1 0h1M21 238.5h1m1 0h1M1018 238.5h1m1 0h1M21 251.5h1m1 0h1M1018 251.5h1m1 0h1M21 264.5h1m1 0h1M1018 264.5h1m1 0h1M22 277.5h1m1 0h1m1 0h1M1015 277.5h1m1 0h1m1 0h1M21 290.5h1m1 0h1M1018 290.5h1m1 0h1M21 303.5h1m1 0h1M1018 303.5h1m1 0h1M21 316.5h1m1 0h1M1018 316.5h1m1 0h1M21 329.5h1m1 0h1M1018 329.5h1m1 0h1M22 342.5h1m1 0h1m1 0h1M1015 342.5h1m1 0h1m1 0h1M21 355.5h1m1 0h1M1018 355.5h1m1 0h1M21 368.5h1m1 0h1M1018 368.5h1m1 0h1M21 381.5h1m1 0h1M1018 381.5h1m1 0h1M21 394.5h1m1 0h1M1018 394.5h1m1 0h1M22 407.5h1m1 0h1m1 0h1M1015 407.5h1m1 0h1m1 0h1M21 420.5h1m1 0h1M1018 420.5h1m1 0h1M21 433.5h1m1 0h1M1018 433.5h1m1 0h1M21 446.5h1m1 0h1M1018 446.5h1m1 0h1M21 459.5h1m1 0h1M1018 459.5h1m1 0h1M22 472.5h1m1 0h1m1 0h1M1015 472.5h1m1 0h1m1 0h1M21 485.5h1m1 0h1M1018 485.5h1m1 0h1M21 498.5h1m1 0h1M1018 498.5h1m1 0h1M21 511.5h1m1 0h1M1018 511.5h1m1 0h1M21 524.5h1m1 0h1M1018 524.5h1m1 0h1M22 537.5h1m1 0h1m1 0h1M1015 537.5h1m1 0h1m1 0h1M21 550.5h1m1 0h1M1018 550.5h1m1 0h1M21 563.5h1m1 0h1M1018 563.5h1m1 0h1M21 576.5h1m1 0h1M1018 576.5h1m1 0h1M21 589.5h1m1 0h1M1018 589.5h1m1 0h1M22 602.5h1m1 0h1m1 0h1M1015 602.5h1m1 0h1m1 0h1M21 615.5h1m1 0h1M1018 615.5h1m1 0h1M21 628.5h1m1 0h1M1018 628.5h1m1 0h1M21 641.5h1m1 0h1M1018 641.5h1m1 0h1M21 654.5h1m1 0h1M1018 654.5h1m1 0h1" stroke="#fff" stroke-width="1"/>
<!-- graticule frame -->
<path d="M20.5 16V669M20 16.5H1022M1021.5 16V669M20 668.5H1022" stroke="#5b93d3" stroke-width="1" fill="none"/>
<!-- top overview bar -->
<rect x="121.5" y="0.5" width="799" height="15" fill="#020402" stroke="#5b93d3"/>
<path d="M283 7.5H761" stroke="#00a000" stroke-width="1"/>
<rect x="519" y="1" width="5" height="14" fill="#fff"/>
<path d="M521.5 4V13" stroke="#000"/>
<path d="M521.5 3V5" stroke="#ffa000"/>
<path d="M518 1h1v1h-1zM524 1h1v1h-1z" fill="#ffa000"/>
<polygon points="515.5,17 527.5,17 521.5,23" fill="#ffa000" shape-rendering="auto"/>
<g shape-rendering="auto">
<!-- T marker in top bar -->
<polygon points="122,10.5 127.5,5 133,5 134,6 134,15 133,16 127.5,16" fill="#ffa000"/>
<path d="M127.5 7H133M130.3 7V15" stroke="#000" stroke-width="2" fill="none"/>
<!-- T marker at left -->
<polygon points="21,30.5 27.5,24 37,24 38,25 38,36 37,37 27.5,37" fill="#ffa000"/>
<path d="M27.5 26H37M32 26V36" stroke="#000" stroke-width="2" fill="none"/>
<!-- channel markers -->
<polygon points="0.6,73.8 12.6,73.8 20,81.5 12.6,89.2 0.6,89.2" fill="#000" stroke="#f478f4" stroke-width="1.2"/>
<polygon points="0.6,529.8 12.6,529.8 20,537.5 12.6,545.2 0.6,545.2" fill="#000" stroke="#00ffff" stroke-width="1.2"/>
<polygon points="0,662 3,659 12.5,659 20,667.5 12.5,676 3,676 0,673" fill="#00a800"/>
<path d="M0 662L3 659.5H12.5L19.5 667.5" stroke="#30c830" stroke-width="1" fill="none"/>
</g>
</svg>
<div class="t" style="left:-0.3px;top:-2.8px;font-family:'Liberation Serif','DejaVu Serif',serif;font-weight:bold;font-size:20.5px;line-height:24px;letter-spacing:-1.2px;-webkit-text-stroke:0;">Tek</div>
<div class="t" style="left:34.1px;top:0;transform:scaleX(1.115);transform-origin:0 0;">Run</div>
<div class="t" style="left:926.7px;top:0;transform:scaleX(1.105);transform-origin:0 0;">Trig?</div>
<div class="box" style="left:20px;top:670px;width:555px;height:21px;border-radius:6px 10px 10px 6px;"></div>
<div class="pill" style="left:165px;top:673px;background:#00e6e6;"></div><div class="t" style="left:173.25px;top:673px;color:#000;-webkit-text-stroke:0.1px;">2</div>
<svg class="t" style="left:196px;top:675px;" width="9" height="12" viewBox="0 0 9 12" shape-rendering="auto"><path d="M4.5 0V8" stroke="#00f6f6" stroke-width="1.5" fill="none"/><path d="M0.7 5.8H8.3L4.5 11Z" fill="#00f6f6"/></svg>
<div class="t" style="left:207.50px;top:673px;letter-spacing:-0.02px;color:#00f6f6;">100mV</div>
<div class="t" style="left:268.4px;top:673px;color:#00f6f6;-webkit-text-stroke:0;"><span class="om">&#937;</span></div><div class="t bw" style="left:283px;top:673px;color:#00f6f6;">B</div><div class="t bw" style="left:286.6px;top:677px;color:#00f6f6;">W</div>
<div class="pill" style="left:304px;top:673px;background:#a800a8;"></div><div class="t" style="left:312.05px;top:673px;color:#000;-webkit-text-stroke:0.1px;">3</div>
<div class="t" style="left:346.20px;top:673px;letter-spacing:0.24px;color:#b000b0;">50.0mV</div>
<div class="t" style="left:407.6px;top:673px;color:#b000b0;-webkit-text-stroke:0;"><span class="om">&#937;</span></div><div class="t bw" style="left:422.2px;top:673px;color:#b000b0;">B</div><div class="t bw" style="left:425.8px;top:677px;color:#b000b0;">W</div>
<div class="pill" style="left:443px;top:673px;background:#00a800;"></div><div class="t" style="left:451.05px;top:673px;color:#000;-webkit-text-stroke:0.1px;">4</div>
<svg class="t" style="left:474.2px;top:675px;" width="9" height="12" viewBox="0 0 9 12" shape-rendering="auto"><path d="M4.5 0V8" stroke="#00a800" stroke-width="1.5" fill="none"/><path d="M0.7 5.8H8.3L4.5 11Z" fill="#00a800"/></svg>
<div class="t" style="left:484.90px;top:673px;letter-spacing:0.40px;color:#00a800;">50.0mV</div>
<div class="t" style="left:546.8px;top:673px;color:#00a800;-webkit-text-stroke:0;"><span class="om">&#937;</span></div><div class="t bw" style="left:561.4px;top:673px;color:#00a800;">B</div><div class="t bw" style="left:565px;top:677px;color:#00a800;">W</div>
<div class="box" style="left:582px;top:670px;width:149px;height:38px;"></div>
<div class="t" style="left:587.50px;top:673px;letter-spacing:0.63px;">400ns</div>
<div class="t" style="left:587px;top:691px;width:12px;height:13px;border-radius:2.5px;background:#ffa000;"></div>
<svg class="t" style="left:586px;top:690px;" width="40" height="16" viewBox="0 0 40 16" shape-rendering="auto"><path d="M2.5 4.5H12M7.2 4.5V13.5" stroke="#000" stroke-width="2.2" fill="none"/><path d="M14 7.5H20" stroke="#ffa000" stroke-width="1.5" fill="none"/><path d="M18.5 3.8L23.5 7.5L18.5 11.2Z" fill="#ffa000"/><path d="M24 4H35.4L29.7 10.4Z" fill="#ffa000"/></svg>
<div class="t" style="left:623.30px;top:690px;letter-spacing:0.29px;color:#ffa000;">1.801600ms</div>
<div class="box" style="left:737px;top:670px;width:108px;height:38px;"></div>
<div class="t" style="left:743.30px;top:673px;letter-spacing:0.61px;">2.50GS/s</div>
<div class="t" style="left:743.70px;top:690px;letter-spacing:0.84px;">1M points</div>
<div class="box" style="left:851px;top:670px;width:171px;height:39px;"></div>
<div class="pill" style="left:882px;top:673px;background:#ffff00;"></div><div class="t" style="left:889.90px;top:673px;color:#000;-webkit-text-stroke:0.1px;">1</div>
<svg class="t" style="left:918px;top:674px;" width="16" height="14" viewBox="0 0 16 14" shape-rendering="auto"><path d="M1.8 10.6H6L9.6 2.2H14.2" stroke="#fff" stroke-width="1.9" fill="none"/></svg>
<div class="t" style="left:964.90px;top:673px;letter-spacing:0.28px;">3.20 V</div>
<div class="box" style="left:909px;top:729px;width:113px;height:37px;"></div>
<div class="t" style="left:915.10px;top:733px;letter-spacing:1.22px;">25 Jun 2023</div>
<div class="t" style="left:916.00px;top:749px;letter-spacing:0.47px;">15:51:53</div>
<div class="btn" style="left:20px;"></div>
<div class="t" style="left:58.90px;top:725px;letter-spacing:-0.30px;">Save</div>
<div class="t" style="left:23.90px;top:742px;letter-spacing:0.21px;">Screen Image</div>
<div class="btn" style="left:138px;"></div>
<div class="t" style="left:177.10px;top:725px;letter-spacing:-0.20px;">Save</div>
<div class="t" style="left:156.40px;top:742px;letter-spacing:0.40px;">Waveform</div>
<div class="btn" style="left:256px;"></div>
<div class="t" style="left:295.40px;top:725px;letter-spacing:-0.43px;">Save</div>
<div class="t" style="left:290.10px;top:742px;letter-spacing:0.80px;">Setup</div>
<div class="btn" style="left:374px;"></div>
<div class="t" style="left:409.60px;top:725px;letter-spacing:0.06px;">Recall</div>
<div class="t" style="left:392.40px;top:742px;letter-spacing:0.40px;">Waveform</div>
<div class="btn sel" style="left:492px;"></div>
<div class="t" style="left:527.40px;top:725px;letter-spacing:0.02px;">Recall</div>
<div class="t" style="left:526.10px;top:742px;letter-spacing:0.80px;">Setup</div>
<div class="btn" style="left:610px;"></div>
<div class="btn" style="left:728px;"></div>
<div class="t" style="left:771.50px;top:725px;letter-spacing:0.73px;">File</div>
<div class="t" style="left:754.60px;top:742px;letter-spacing:0.75px;">Utilities</div>
<div class="t" style="left:641.40px;top:716px;letter-spacing:0.74px;">Assign</div>
<div class="t" style="left:639px;top:733px;width:34px;height:13px;background:#fff;border-radius:7px 2px 2px 7px;border-right:2px solid #9a9a9a;border-bottom:2px solid #8a8a8a;"></div>
<div class="t" style="left:643px;top:733.5px;height:14px;line-height:14px;color:#000;font-family:'Liberation Sans',sans-serif;font-weight:bold;font-size:11px;-webkit-text-stroke:0;letter-spacing:0.2px;">Save</div>
<div class="t" style="left:680.10px;top:733px;letter-spacing:0.50px;">to</div>
<div class="t" style="left:641px;top:750px;width:52px;height:16px;background:#0868ff;"></div>
<div class="t" style="left:643.40px;top:750px;letter-spacing:0.05px;">Image</div>
<div class="panel"></div>
<div class="t" style="left:939.50px;top:215px;letter-spacing:0.08px;">Recall</div>
<div class="t" style="left:938.10px;top:232px;letter-spacing:0.72px;">Setup</div>
<div class="pbtn" style="top:251px;"></div>
<div class="pbtn" style="top:325px;"></div>
<div class="pbtn" style="top:399px;"></div>
<div class="pbtn" style="top:473px;"></div>
<div class="pbtn" style="top:547px;"></div>
<svg class="t" style="left:947px;top:264px;" width="28" height="29" viewBox="0 0 28 29">
<path d="M0 0H22L27 5V28H0Z" fill="#8c8e8c"/>
<path d="M0.5 28V0.5H22" stroke="#3a3a3a" fill="none"/>
<path d="M21 0L27 6" stroke="#000" stroke-width="2" fill="none"/>
<path d="M26.5 5V28M0 27.5H27" stroke="#111" fill="none"/>
<path d="M2.5 2V26" stroke="#b8baba" fill="none"/>
<rect x="4" y="1" width="19" height="9" fill="#222"/>
<rect x="6" y="2" width="15" height="6" fill="#fff"/>
<rect x="15" y="2" width="4" height="6" fill="#a4a8a8"/>
<rect x="2" y="10" width="23" height="3" fill="#a0a2a2"/>
<rect x="4" y="13" width="19" height="14" fill="#000"/>
<rect x="6" y="15" width="15" height="11" fill="#fff"/>
<rect x="6" y="26" width="15" height="2" fill="#909292"/>
<path d="M8.5 18.5H19M8.5 22.5H19" stroke="#777" stroke-width="1.4" fill="none"/>
</svg>
<div class="t" style="left:924.30px;top:294px;letter-spacing:0.78px;">From File</div>
<div class="t" style="left:946.10px;top:344px;letter-spacing:0.30px;">Edit</div>
<div class="t" style="left:937.50px;top:361px;">Labels</div>
<div class="t" style="left:932.90px;top:401px;letter-spacing:0.56px;">Setup1</div>
<div class="t" style="left:911.90px;top:435px;letter-spacing:0.79px;">12-Jun-2023</div>
<div class="t" style="left:925.70px;top:452px;letter-spacing:0.53px;">09:55:51</div>
<div class="t" style="left:932.90px;top:475px;letter-spacing:0.96px;">Setup2</div>
<div class="t" style="left:912.40px;top:509px;letter-spacing:0.74px;">12-Jun-2023</div>
<div class="t" style="left:926.30px;top:526px;letter-spacing:0.50px;">09:43:46</div>
<div class="t" style="left:929.80px;top:566px;letter-spacing:-0.12px;">−more−</div>
<div class="t" style="left:939.50px;top:583px;letter-spacing:0.28px;">1 of 3</div>
<div class="t" style="left:3.20px;top:73px;color:#a000a0;">3</div>
<div class="t" style="left:3.30px;top:529.5px;color:#00ffff;">2</div>
<div class="t" style="left:3.10px;top:658.5px;color:#000;">4</div>
</div></body></html>
